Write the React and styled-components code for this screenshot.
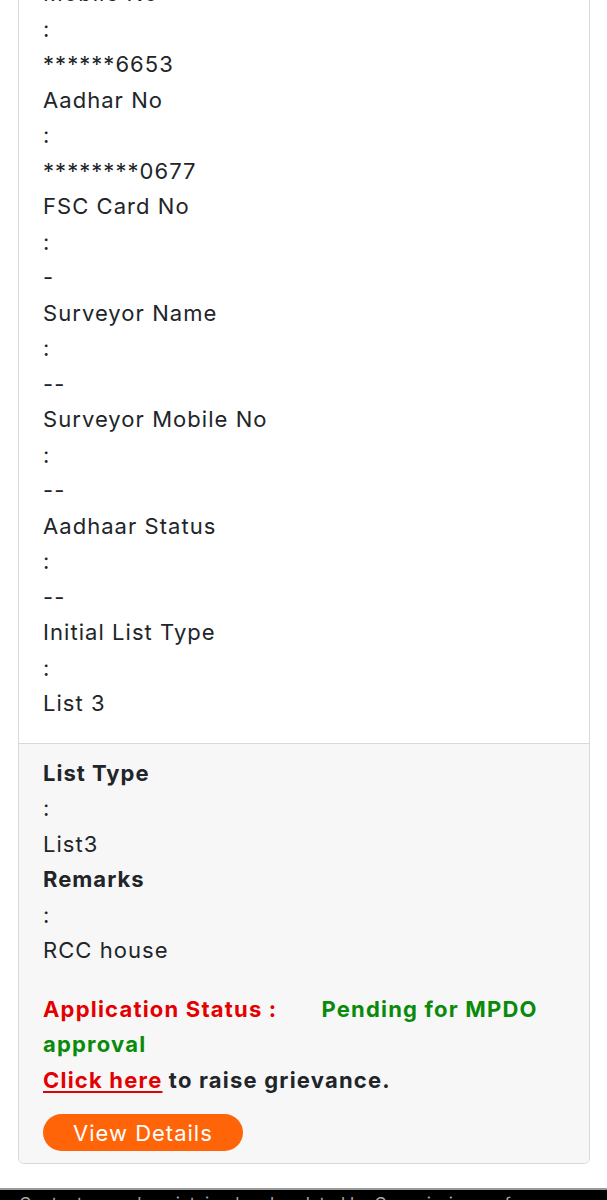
import React from "react";
import styled, { createGlobalStyle } from "styled-components";

const GlobalStyle = createGlobalStyle`
  html, body {
    margin: 0;
    padding: 0;
    background: #ffffff;
  }
  body {
    font-family: Inter, "Open Sans", "Liberation Sans", sans-serif;
    color: #212529;
    -webkit-font-smoothing: antialiased;
  }
`;

const Page = styled.div`
  /* page is scrolled part-way down the applicant card */
  margin-top: -25px;
  overflow: hidden;
`;

const Card = styled.div`
  margin: 0 17px 24px 18px;
  border: 1px solid #d9d9d9;
  border-radius: 6px;
  background: #ffffff;
  overflow: hidden;
`;

const CardBody = styled.div`
  padding: 0 24px 21px;
`;

const CardFooter = styled.div`
  background: #f7f7f7;
  border-top: 1px solid #d9d9d9;
  padding: 12px 24px 12px;
`;

const Line = styled.div`
  font-size: 22px;
  line-height: 35.5px;
  letter-spacing: ${(p) => (p.$bold ? "1px" : "1.05px")};
  font-weight: ${(p) => (p.$bold ? 700 : 400)};
  color: #212529;
  white-space: nowrap;
`;

const StatusBlock = styled.div`
  margin-top: 23px;
  font-size: 22px;
  line-height: 35.5px;
  letter-spacing: 1.2px;
  font-weight: 700;
`;

const StatusLabel = styled.span`
  color: #e40000;
  margin-right: 44px;
`;

const StatusValue = styled.span`
  color: #0a8a0a;
`;

const Grievance = styled.div`
  color: #212529;
`;

const GrievanceLink = styled.a`
  color: #e40000;
  text-decoration: underline;
  text-decoration-thickness: 2px;
  text-underline-offset: 3px;
  cursor: pointer;
`;

const ViewButton = styled.button`
  display: inline-flex;
  align-items: center;
  justify-content: center;
  margin-top: 16px;
  height: 37px;
  padding: 0 30px;
  border: none;
  border-radius: 20px;
  background: #ff6508;
  color: #ffffff;
  font-family: inherit;
  font-size: 22px;
  letter-spacing: 1px;
  font-weight: 400;
  cursor: pointer;
`;

const Footer = styled.footer`
  background: #000000;
  border-top: 2px solid #9a9a9a;
  padding: 3px 19px 20px;
  color: #a8a8a8;
  font-size: 17px;
  line-height: 22px;
`;

const Field = ({ label, value, bold }) => (
  <>
    <Line $bold={bold}>{label}</Line>
    <Line>:</Line>
    <Line>{value}</Line>
  </>
);

const details = [
  ["Mobile No", "******6653"],
  ["Aadhar No", "********0677"],
  ["FSC Card No", "-"],
  ["Surveyor Name", "--"],
  ["Surveyor Mobile No", "--"],
  ["Aadhaar Status", "--"],
  ["Initial List Type", "List 3"],
];

export default function App() {
  return (
    <>
      <GlobalStyle />
      <Page>
        <Card>
          <CardBody>
            {details.map(([label, value]) => (
              <Field key={label} label={label} value={value} />
            ))}
          </CardBody>
          <CardFooter>
            <Field bold label="List Type" value="List3" />
            <Field bold label="Remarks" value="RCC house" />
            <StatusBlock>
              <StatusLabel>Application Status :</StatusLabel>
              <StatusValue>Pending for MPDO approval</StatusValue>
              <Grievance>
                <GrievanceLink>Click here</GrievanceLink> to raise grievance.
              </Grievance>
            </StatusBlock>
            <ViewButton>View Details</ViewButton>
          </CardFooter>
        </Card>
        <Footer>
          Content owned, maintained and updated by Commissioner of Panchayat Raj
          &amp; Rural Development
        </Footer>
      </Page>
    </>
  );
}
